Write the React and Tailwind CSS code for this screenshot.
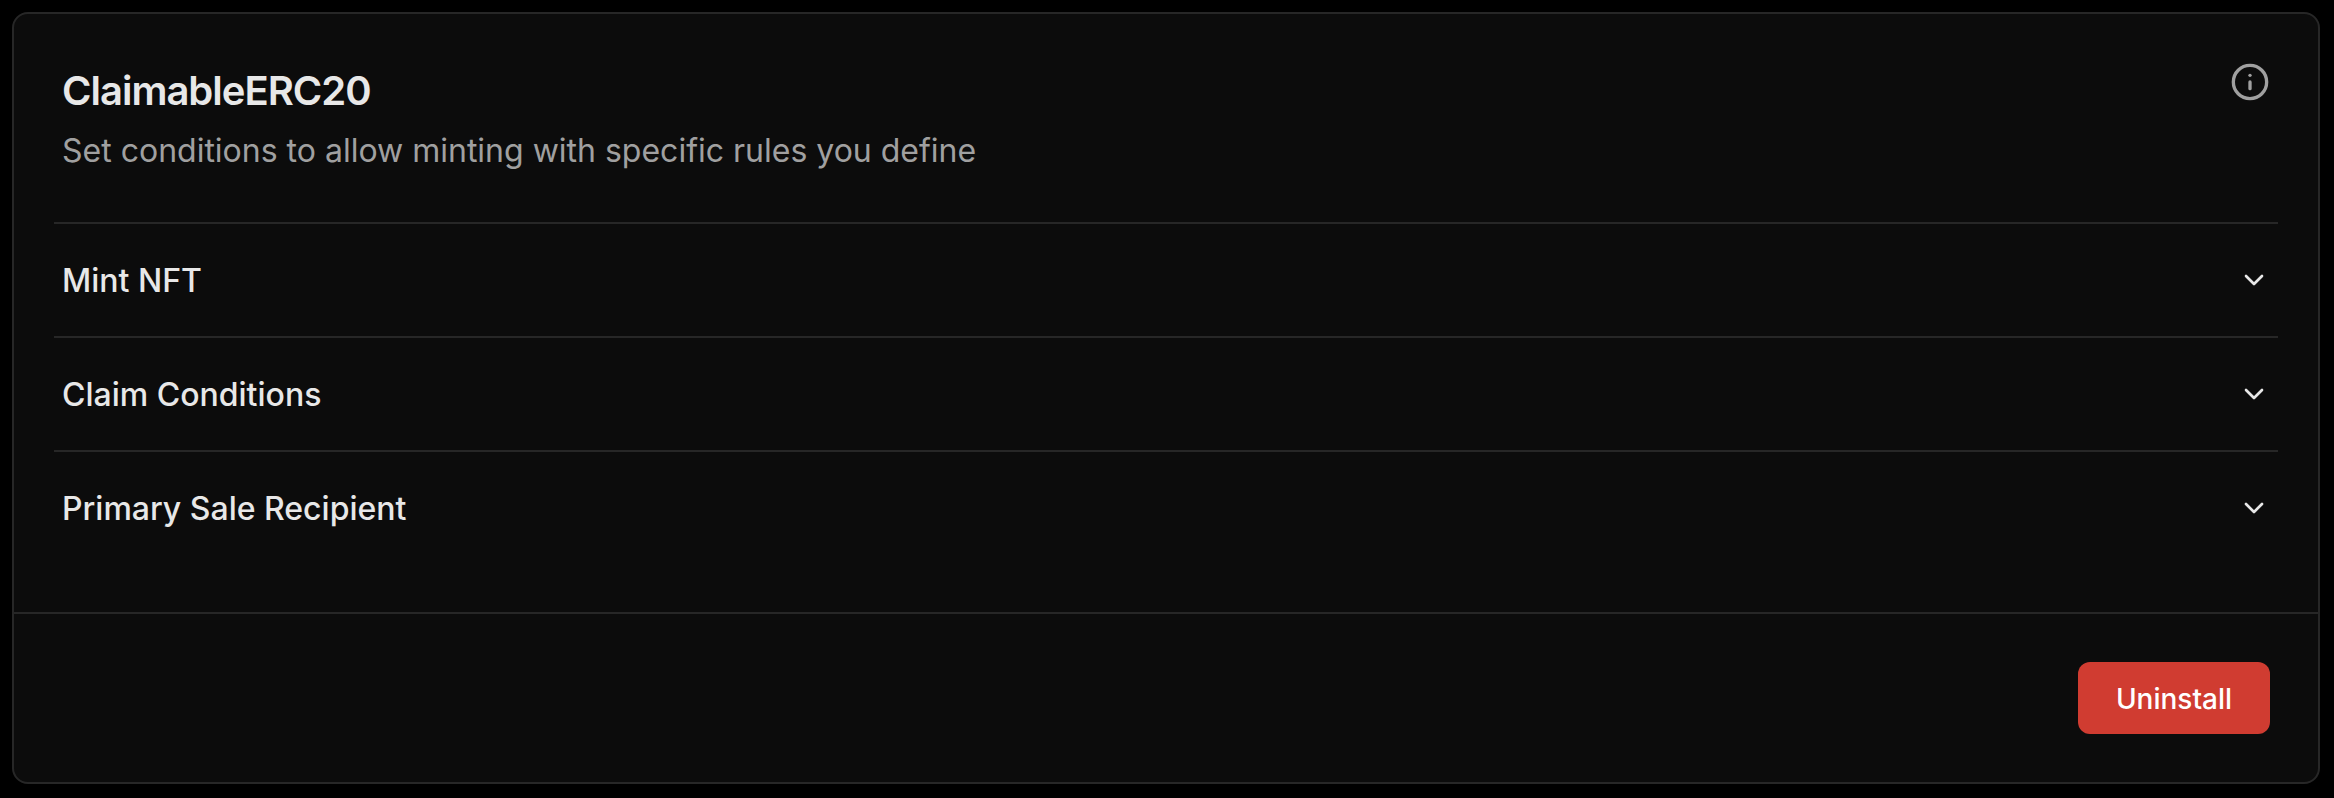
import { ChevronDown, Info } from "lucide-react";

const sections = ["Mint NFT", "Claim Conditions", "Primary Sale Recipient"];

export default function App() {
  return (
    <main className="h-[798px] bg-black pt-3 pr-3.5 pb-3.5 pl-3 font-[Inter,sans-serif] text-[#e8e8e8]">
      <section className="flex h-full flex-col rounded-2xl border-2 border-[#272727] bg-[#0c0c0c]">
        <header className="flex h-[208px] items-start justify-between px-12 pt-12">
          <div>
            <h1 className="mt-[5px] text-[40px] leading-[48px] font-semibold tracking-[-1px]">ClaimableERC20</h1>
            <p className="mt-3 text-[32px] leading-[48px] text-[#a0a0a0]">Set conditions to allow minting with specific rules you define</p>
          </div>
          <Info className="size-10 text-[#a0a0a0]" />
        </header>
        <div className="mx-10">
          {sections.map((title) => (
            <button key={title} className="flex h-[114px] w-full items-center justify-between border-t-2 border-[#272727] px-2 text-[32px] font-medium">
              <span className="pt-0.5">{title}</span>
              <ChevronDown className="size-8" />
            </button>
          ))}
        </div>
        <footer className="mt-auto flex h-[170px] items-center justify-end border-t-2 border-[#272727] px-12">
          <button className="h-[72px] w-48 rounded-xl bg-[#d03c31] pt-0.5 text-[28px] font-medium text-white">Uninstall</button>
        </footer>
      </section>
    </main>
  );
}
